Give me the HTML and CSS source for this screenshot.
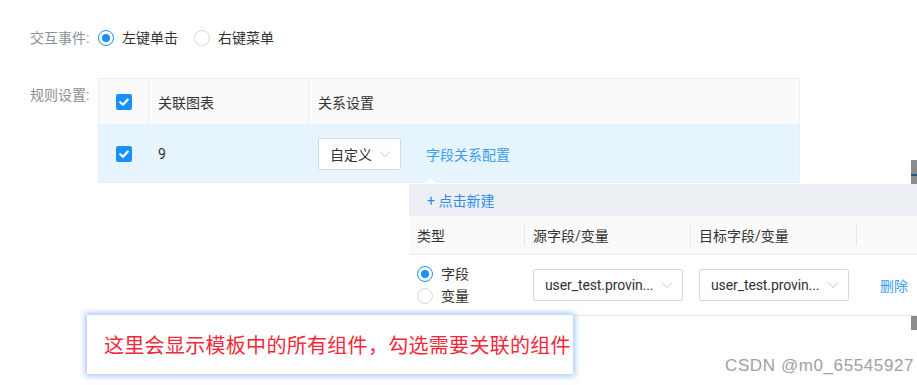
FILE: index.html
```html
<!DOCTYPE html>
<html lang="zh">
<head>
<meta charset="utf-8">
<title>交互设置</title>
<link rel="stylesheet" href="styles.css">
</head>
<body>
<div class="page">
  <div class="form-row row-event">
    <div class="label">交互事件:</div>
    <div class="radio-group">
      <label class="radio checked"><span class="dot"></span><span class="rtext">左键单击</span></label>
      <label class="radio"><span class="dot"></span><span class="rtext">右键菜单</span></label>
    </div>
  </div>

  <div class="form-row row-rule">
    <div class="label label-top">规则设置:</div>
    <div class="table">
      <div class="tr thead">
        <div class="td col-check"><span class="checkbox"><svg viewBox="0 0 16 16" width="16" height="16"><path d="M4.2 8.2 L7 10.8 L11.8 5.6" fill="none" stroke="#fff" stroke-width="2.2" stroke-linecap="round" stroke-linejoin="round"/></svg></span></div>
        <div class="td col-chart">关联图表</div>
        <div class="td col-rel">关系设置</div>
      </div>
      <div class="tr tbody">
        <div class="td col-check"><span class="checkbox"><svg viewBox="0 0 16 16" width="16" height="16"><path d="M4.2 8.2 L7 10.8 L11.8 5.6" fill="none" stroke="#fff" stroke-width="2.2" stroke-linecap="round" stroke-linejoin="round"/></svg></span></div>
        <div class="td col-chart num">9</div>
        <div class="td col-rel">
          <div class="select sel-small"><span>自定义</span><svg class="chev" viewBox="0 0 12 8" width="12" height="8"><path d="M1 1.5 L6 6.5 L11 1.5" fill="none" stroke="#c0c4cc" stroke-width="1"/></svg></div>
          <a class="link">字段关系配置</a>
        </div>
      </div>
    </div>
  </div>
</div>

<div class="scroll-strip"><span class="strip-line"></span></div>

<div class="popover">
  <span class="arrow"></span>
  <div class="pop-top"><span class="link">+ 点击新建</span></div>
  <div class="pop-head">
    <div class="pc c1">类型</div>
    <div class="pc c2">源字段/变量</div>
    <div class="pc c3">目标字段/变量</div>
    <div class="pc c4"></div>
  </div>
  <div class="pop-row">
    <div class="pc c1 radios">
      <label class="radio checked"><span class="dot"></span><span class="rtext">字段</span></label>
      <label class="radio"><span class="dot"></span><span class="rtext">变量</span></label>
    </div>
    <div class="pc c2"><div class="select sel-wide"><span class="latin">user_test.provin...</span><svg class="chev" viewBox="0 0 12 8" width="12" height="8"><path d="M1 1.5 L6 6.5 L11 1.5" fill="none" stroke="#c0c4cc" stroke-width="1"/></svg></div></div>
    <div class="pc c3"><div class="select sel-wide"><span class="latin">user_test.provin...</span><svg class="chev" viewBox="0 0 12 8" width="12" height="8"><path d="M1 1.5 L6 6.5 L11 1.5" fill="none" stroke="#c0c4cc" stroke-width="1"/></svg></div></div>
    <div class="pc c4"><a class="link del">删除</a></div>
  </div>
</div>

<div class="note">这里会显示模板中的所有组件，勾选需要关联的组件</div>
<div class="watermark">CSDN @m0_65545927</div>
</body>
</html>
```

FILE: styles.css
```css
* { box-sizing: border-box; }
html, body { margin: 0; padding: 0; background: #fff; }
body {
  width: 917px;
  height: 385px;
  overflow: hidden;
  position: relative;
  font-family: Roboto, "Noto Sans CJK SC", sans-serif;
  font-size: 14px;
  color: #333;
}
.page { padding: 28px 0 0 30px; }
.form-row { display: flex; }
.row-event { align-items: center; height: 20px; line-height: 20px; }
.row-rule { margin-top: 30px; }
.label { width: 68px; color: #8a8f99; line-height: 20px; white-space: nowrap; }
.label-top { padding-top: 7px; }

.radio-group { display: flex; align-items: center; }
.radio { display: inline-flex; align-items: center; line-height: 20px; }
.radio-group .radio + .radio { margin-left: 16px; }
.dot {
  width: 16px; height: 16px; border-radius: 50%;
  border: 1px solid #d9d9d9; background: #fff;
  display: inline-flex; align-items: center; justify-content: center;
  margin-right: 8px;
}
.radio.checked .dot { border-color: #1890ff; }
.radio.checked .dot::after {
  content: ""; width: 8px; height: 8px; border-radius: 50%; background: #1890ff;
}

.table {
  width: 702px;
  border: 1px solid #ebeef5;
}
.tr { display: grid; grid-template-columns: 49px 160px 1fr; }
.thead { height: 46px; background: #fafafa; border-bottom: 1px solid #ebeef5; }
.tbody { height: 57px; background: #e6f5fd; }
.td { display: flex; align-items: center; padding-left: 9px; border-left: 1px solid #ebeef5; }
.td.col-check { border-left: none; justify-content: center; padding-left: 0; }
.checkbox { width: 16px; height: 16px; border-radius: 2px; background: #1890ff; display: block; }
.checkbox svg { display: block; }
.num { font-family: Roboto, sans-serif; }

.select {
  display: flex; align-items: center; justify-content: space-between;
  border: 1px solid #d9d9d9; border-radius: 2px; background: #fff;
  height: 32px; padding: 0 9px 0 11px;
}
.sel-small { width: 83px; }
.sel-wide { width: 150px; height: 32px; }
.chev { display: block; }
.link { color: #2d8cf0; cursor: pointer; }
.col-rel .link { margin-left: 25px; color: #3b9cf3; }
.latin { font-family: Roboto, "Noto Sans", sans-serif; font-size: 14px; color: #333; letter-spacing: -0.1px; }

.scroll-strip {
  position: absolute; left: 911px; top: 160px; width: 6px; height: 170px;
  background: #8c8c8c; z-index: 1;
}
.strip-line { position: absolute; left: 0; top: 14px; width: 6px; height: 2px; background: #1e5a8a; }

.popover {
  position: absolute; left: 409px; top: 184px; width: 530px;
  background: #fff; z-index: 2;
}
.arrow {
  position: absolute; left: 16px; top: -6px;
  width: 0; height: 0;
  border-left: 6px solid transparent; border-right: 6px solid transparent;
  border-bottom: 6px solid #fff;
}
.pop-top { height: 32px; background: #ecf0f4; display: flex; align-items: center; padding-left: 18px; }
.pop-top .link { color: #2d8cf0; }
.pop-head {
  display: flex; height: 39px; background: #fafafa;
  border-bottom: 1px solid #e8e8e8; align-items: center;
}
.pop-head .pc { height: 22px; display: flex; align-items: center; }
.pop-head .c2, .pop-head .c3, .pop-head .c4 { border-left: 1px solid #e8e8e8; }
.pc { padding-left: 8px; flex: none; }
.c1 { width: 115px; }
.c2 { width: 166px; }
.c3 { width: 166px; }
.c4 { width: 83px; }
.pop-row {
  display: flex; height: 61px; align-items: center;
  border-bottom: 1px solid #e8e8e8;
}
.pop-row .c2, .pop-row .c3 { padding-left: 9px; }
.pop-row .c4 { padding-left: 24px; }
.radios { display: flex; flex-direction: column; }
.radios .radio { line-height: 22px; height: 22px; }
.radios .dot { margin-right: 8px; }
.del { color: #3b9cf3; }

.note {
  position: absolute; left: 87px; top: 315px; width: 486px; height: 59px;
  background: #fff; z-index: 3;
  box-shadow: 0 0 6px 2px rgba(90, 150, 245, 0.55);
  color: #f2283a; font-size: 20px; line-height: 59px;
  padding-left: 17px; white-space: nowrap; letter-spacing: 0.3px;
  font-family: "Noto Sans CJK SC", sans-serif;
}
.watermark {
  position: absolute; left: 725px; top: 356px;
  font-family: "Liberation Sans", Arial, sans-serif; font-size: 17px;
  color: #a0a0a0; letter-spacing: 0.6px; white-space: nowrap;
}
```
